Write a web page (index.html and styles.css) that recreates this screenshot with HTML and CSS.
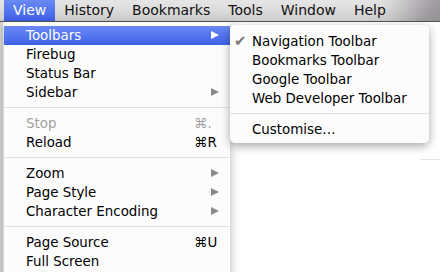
FILE: index.html
```html
<!DOCTYPE html>
<html lang="en">
<head>
    <meta charset="UTF-8">
    <title>View menu</title>
    <link rel="stylesheet" href="styles.css">
</head>
<body>
    <div class="screen">
        <div class="menubar">
            <span class="menubar-item active">View</span>
            <span class="menubar-item">History</span>
            <span class="menubar-item">Bookmarks</span>
            <span class="menubar-item">Tools</span>
            <span class="menubar-item">Window</span>
            <span class="menubar-item">Help</span>
        </div>

        <div class="page">
            <div class="page-line line-a"></div>
            <div class="page-line line-b"></div>
        </div>

        <!-- View menu -->
        <ul class="menu main-menu">
            <li class="item selected">Toolbars<span class="arrow"></span></li>
            <li class="item">Firebug</li>
            <li class="item">Status Bar</li>
            <li class="item">Sidebar<span class="arrow"></span></li>
            <li class="sep"></li>
            <li class="item disabled">Stop<span class="key">&#8984;.</span></li>
            <li class="item">Reload<span class="key">&#8984;R</span></li>
            <li class="sep"></li>
            <li class="item">Zoom<span class="arrow"></span></li>
            <li class="item">Page Style<span class="arrow"></span></li>
            <li class="item">Character Encoding<span class="arrow"></span></li>
            <li class="sep"></li>
            <li class="item">Page Source<span class="key">&#8984;U</span></li>
            <li class="item">Full Screen</li>
        </ul>

        <!-- Toolbars submenu -->
        <ul class="menu sub-menu">
            <li class="item checked">Navigation Toolbar</li>
            <li class="item">Bookmarks Toolbar</li>
            <li class="item">Google Toolbar</li>
            <li class="item">Web Developer Toolbar</li>
            <li class="sep"></li>
            <li class="item">Customise&#8230;</li>
        </ul>
    </div>
</body>
</html>
```

FILE: styles.css
```css
body {
    margin: 0;
    font-family: 'DejaVu Sans', 'Liberation Sans', sans-serif;
    font-size: 13.4px;
    color: #000;
}

.screen {
    position: relative;
    width: 440px;
    height: 272px;
    overflow: hidden;
    background: #fff;
}

.menubar {
    display: flex;
    height: 21px;
    padding-left: 4px;
    border-bottom: 1px solid #555;
    background: linear-gradient(#ebebeb, #d2d2d2);
    box-shadow: inset -60px 0 40px -30px rgba(60, 50, 60, 0.45);
}

.menubar-item {
    padding: 0 9px;
    line-height: 21px;
    font-size: 14px;
    color: #111;
}

.menubar-item.active {
    color: #fff;
    background: linear-gradient(#6a89f4, #3f62e9);
}

.page {
    height: 250px;
}

.page-line {
    position: absolute;
    background: #e4e4e4;
}

.line-a {
    left: 420px;
    top: 159px;
    width: 20px;
    height: 1px;
}

.line-b {
    left: 0;
    top: 22px;
    width: 3px;
    height: 250px;
    background: #d8d8d8;
}

.menu {
    position: absolute;
    margin: 0;
    list-style: none;
    background: rgba(252, 252, 252, 0.97);
}

.main-menu {
    left: 4px;
    top: 22px;
    width: 226px;
    padding: 4px 0 0;
    height: 260px;
    box-shadow: 0 3px 10px rgba(0, 0, 0, 0.3);
}

.sub-menu {
    left: 230px;
    top: 25px;
    width: 199px;
    padding: 7px 0 4px;
    border-radius: 5px;
    box-shadow: 0 3px 10px rgba(0, 0, 0, 0.35);
}

.item {
    position: relative;
    height: 19px;
    line-height: 19px;
    padding-left: 22px;
}

.item.selected {
    color: #fff;
    background: linear-gradient(#6a89f4, #3f62e9);
}

.item.disabled {
    color: #a0a0a0;
}

.key {
    position: absolute;
    left: 190px;
    top: 0;
}

.arrow {
    position: absolute;
    left: 207px;
    top: 5px;
    border-left: 8px solid #8a8a8a;
    border-top: 4.5px solid transparent;
    border-bottom: 4.5px solid transparent;
}

.selected .arrow {
    border-left-color: #fff;
}

.sep {
    height: 12px;
    position: relative;
}

.sep::after {
    content: "";
    position: absolute;
    left: 0;
    right: 0;
    top: 5px;
    border-top: 1px solid #e2e2e2;
}

.checked::before {
    content: "\2714";
    position: absolute;
    left: 4px;
    top: 0;
    color: #7a7a7a;
    font-size: 15px;
}
```
